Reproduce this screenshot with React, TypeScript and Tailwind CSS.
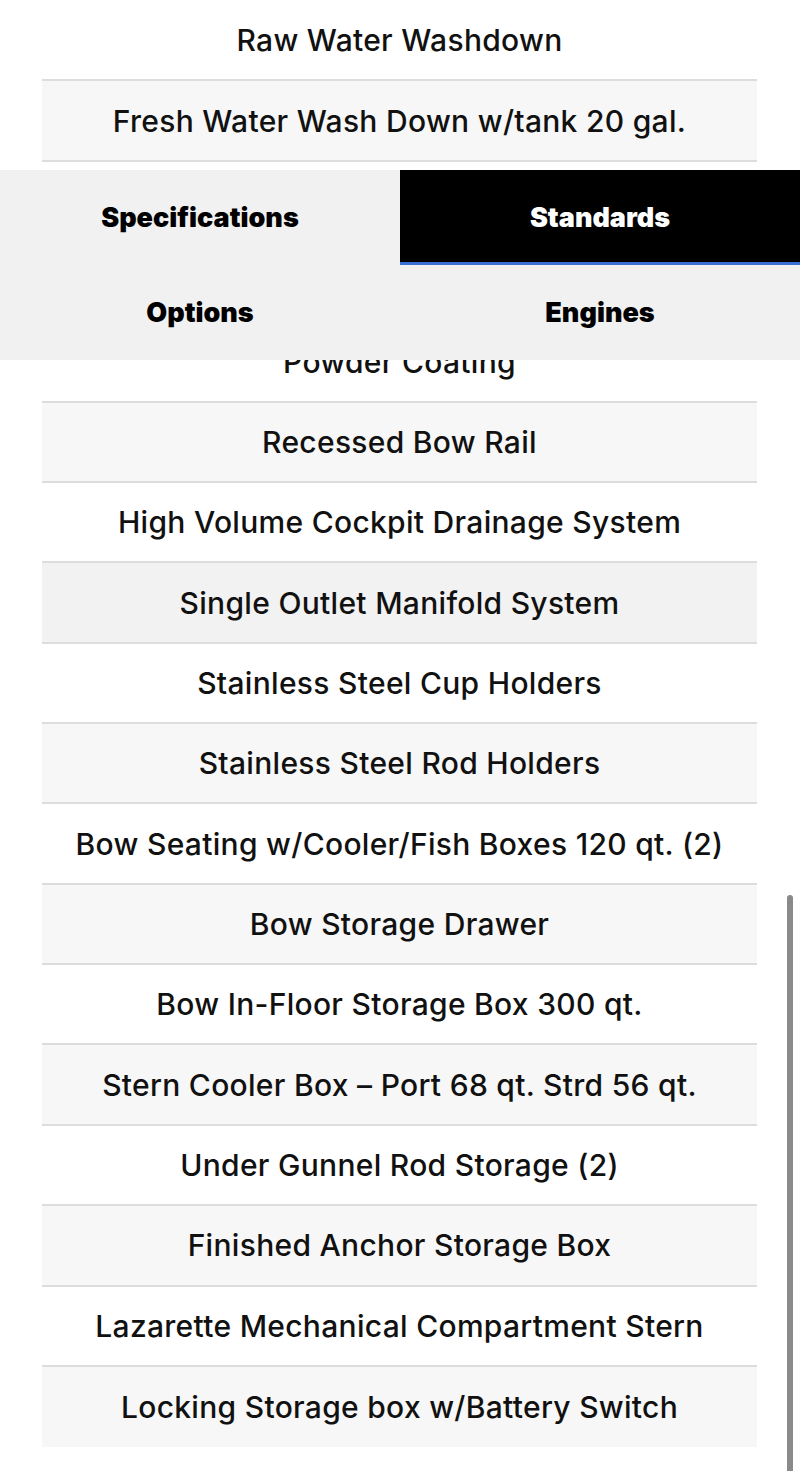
import { useState } from 'react';

const standards = [
  'Raw Water Washdown',
  'Fresh Water Wash Down w/tank 20 gal.',
  'Hydraulic Steering',
  'Trim Tabs w/Indicators',
  'Powder Coating',
  'Recessed Bow Rail',
  'High Volume Cockpit Drainage System',
  'Single Outlet Manifold System',
  'Stainless Steel Cup Holders',
  'Stainless Steel Rod Holders',
  'Bow Seating w/Cooler/Fish Boxes 120 qt. (2)',
  'Bow Storage Drawer',
  'Bow In-Floor Storage Box 300 qt.',
  'Stern Cooler Box – Port 68 qt. Strd 56 qt.',
  'Under Gunnel Rod Storage (2)',
  'Finished Anchor Storage Box',
  'Lazarette Mechanical Compartment Stern',
  'Locking Storage box w/Battery Switch',
];

const tabs = ['Specifications', 'Standards', 'Options', 'Engines'];

export default function App() {
  const [active, setActive] = useState('Standards');

  return (
    <div className="relative w-full h-[1471px] overflow-hidden bg-white font-['Inter',sans-serif]">
      <ul className="ml-[42px] w-[715px] pt-[1px] divide-y-2 divide-[#dddddd]">
        {standards.map((item, index) => (
          <li
            key={item}
            className={`flex h-[80.35px] items-center justify-center pt-[1px] text-[30px] font-medium tracking-[0.3px] text-[#111111] ${
              index === 7 ? 'bg-[#f2f2f2]' : index % 2 === 1 ? 'bg-[#f7f7f7]' : 'bg-white'
            }`}
          >
            {item}
          </li>
        ))}
      </ul>

      <div className="absolute left-0 top-[170px] grid w-full grid-cols-2 bg-[#f1f1f1]">
        {tabs.map((tab) => (
          <button
            key={tab}
            onClick={() => setActive(tab)}
            className={`flex h-[95px] items-center justify-center pt-[2px] text-[27px] font-black ${
              active === tab ? 'bg-black text-white shadow-[inset_0_-3px_0_#3a6fd3]' : 'text-black'
            }`}
          >
            {tab}
          </button>
        ))}
      </div>

      <div className="absolute right-[7px] top-[895px] h-[600px] w-[6px] rounded-full bg-[#8a8a8a]" />
    </div>
  );
}
